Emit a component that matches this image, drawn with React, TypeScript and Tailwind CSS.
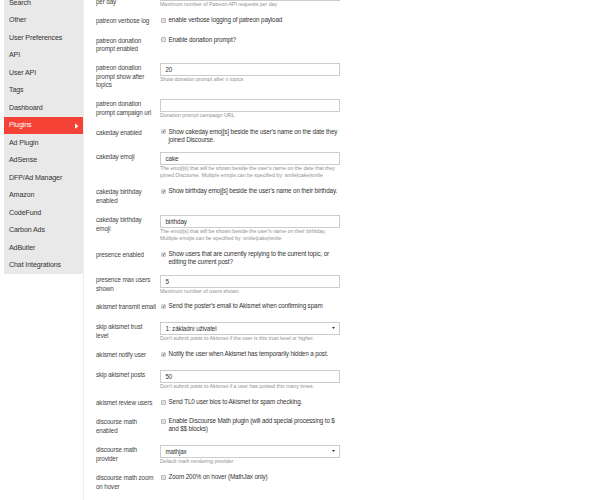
const NAV = [
  'Search', 'Other', 'User Preferences', 'API', 'User API', 'Tags', 'Dashboard', 'Plugins',
  'Ad Plugin', 'AdSense', 'DFP/Ad Manager', 'Amazon', 'CodeFund', 'Carbon Ads', 'AdButler', 'Chat Integrations',
];

type Setting = {
  label: string;
  height: string;
  value?: string;
  select?: boolean;
  check?: boolean;
  text?: string;
  hint?: string;
  labelClass?: string;
};

const SETTINGS: Setting[] = [
  { label: 'per day', height: 'h-[28px]', value: '', hint: 'Maximum number of Patreon API requests per day', labelClass: 'pt-[9.5px]' },
  { label: 'patreon verbose log', height: 'h-[19.5px]', check: false, text: 'enable verbose logging of patreon payload' },
  { label: 'patreon donation\nprompt enabled', height: 'h-[27.5px]', check: false, text: 'Enable donation prompt?' },
  { label: 'patreon donation\nprompt show after\ntopics', height: 'h-[36px]', value: '20', hint: 'Show donation prompt after n topics' },
  { label: 'patreon donation\nprompt campaign url', height: 'h-[28.5px]', value: '', hint: 'Donation prompt campaign URL' },
  { label: 'cakeday enabled', height: 'h-[24.5px]', check: true, text: "Show cakeday emoj[s] beside the user's name on the date they\njoined Discourse." },
  { label: 'cakeday emoji', height: 'h-[35px]', value: 'cake', hint: "The emoji[s] that will be shown beside the user's name on the date that they\njoined Discourse. Multiple emojis can be specified by: smile|cake|smile" },
  { label: 'cakeday birthday\nenabled', height: 'h-[28px]', check: true, text: "Show birthday emoj[s] beside the user's name on their birthday." },
  { label: 'cakeday birthday\nemoji', height: 'h-[35px]', value: 'birthday', hint: "The emoji[s] that will be shown beside the user's name on their birthday.\nMultiple emojis can be specified by: smile|cake|smile" },
  { label: 'presence enabled', height: 'h-[25px]', check: true, text: 'Show users that are currently replying to the current topic, or\nediting the current post?' },
  { label: 'presence max users\nshown', height: 'h-[27px]', value: '5', hint: 'Maximum number of users shown.' },
  { label: 'akismet transmit email', height: 'h-[20px]', check: true, text: "Send the poster's email to Akismet when confirming spam" },
  { label: 'skip akismet trust\nlevel', height: 'h-[28px]', value: '1: základní uživatel', select: true, hint: "Don't submit posts to Akismet if the user is this trust level or higher." },
  { label: 'akismet notify user', height: 'h-[20px]', check: true, text: 'Notify the user when Akismet has temporarily hidden a post.' },
  { label: 'skip akismet posts', height: 'h-[28px]', value: '50', hint: "Don't submit posts to Akismet if a user has posted this many times." },
  { label: 'akismet review users', height: 'h-[19px]', check: false, text: 'Send TL0 user bios to Akismet for spam checking.' },
  { label: 'discourse math\nenabled', height: 'h-[28px]', check: false, text: 'Enable Discourse Math plugin (will add special processing to $\nand $$ blocks)' },
  { label: 'discourse math\nprovider', height: 'h-[28px]', value: 'mathjax', select: true, hint: 'Default math rendering provider' },
  { label: 'discourse math zoom\non hover', height: 'h-[28px]', check: false, text: 'Zoom 200% on hover (MathJax only)' },
];

function Checkbox({ checked }: { checked: boolean }) {
  return (
    <span className={`mt-[1.5px] flex h-[5px] w-[5px] shrink-0 items-center justify-center rounded-[1px] border-[0.5px] ${checked ? 'border-[#cccccc] bg-[#eeeeee]' : 'border-[#bbbbbb] bg-[#e4e4e4]'}`}>
      {checked && (
        <svg viewBox="0 0 10 10" className="h-[5px] w-[5px]">
          <path d="M1.5 5.5 L4 8 L8.5 1.5" fill="none" stroke="#222222" strokeWidth="2.6" />
        </svg>
      )}
    </span>
  );
}

function Row({ item }: { item: Setting }) {
  return (
    <div className={`flex ${item.height}`}>
      <div className={`w-[64px] shrink-0 whitespace-pre pt-[1.25px] text-[6.3px] leading-[8.5px] tracking-[-0.13px] text-[#444444] ${item.labelClass ?? ''}`}>
        {item.label}
      </div>
      <div className="w-[179.5px]">
        {item.check !== undefined ? (
          <div className="flex gap-[3px] pl-[0.5px]">
            <Checkbox checked={item.check} />
            <span className="whitespace-pre text-[6.3px] leading-[8px] tracking-[-0.13px] text-[#333333]">{item.text}</span>
          </div>
        ) : (
          <div className="flex h-[12.5px] items-center justify-between border border-[#cccccc] bg-white pl-[4.5px] pr-[3.5px] text-[6.3px] tracking-[-0.13px] text-[#333333]">
            <span>{item.value}</span>
            {item.select && (
              <svg viewBox="0 0 6 4" className="h-[2px] w-[3px]">
                <path d="M0 0 H6 L3 4 Z" fill="#333333" />
              </svg>
            )}
          </div>
        )}
        {item.hint && (
          <div className="whitespace-pre text-[5.3px] leading-[7.5px] tracking-[-0.04px] text-[#919191]">{item.hint}</div>
        )}
      </div>
    </div>
  );
}

export default function App() {
  return (
    <div className="flex h-[500px] w-[611px] overflow-hidden bg-white pl-[4px] font-['Liberation_Sans',Arial,sans-serif]">
      {/* Sidebar */}
      <div className="h-[500px] w-[80px] shrink-0 border-r border-[#eeeeee]">
        <div className="-mt-[5.75px] bg-[#e9e9e9]">
          {NAV.map((name) => (
            <div
              key={name}
              className={`flex h-[17.5px] items-center justify-between px-[5px] text-[7.1px] tracking-[-0.12px] ${name === 'Plugins' ? 'bg-[#f44336] text-white' : 'text-[#333333]'}`}
            >
              <span>{name}</span>
              {name === 'Plugins' && (
                <svg viewBox="0 0 4 6" className="h-[6px] w-[3.5px]">
                  <path d="M0 0 L4 3 L0 6 Z" fill="#ffffff" />
                </svg>
              )}
            </div>
          ))}
        </div>
      </div>

      {/* Settings */}
      <div className="-mt-[12px] ml-[12px]">
        {SETTINGS.map((item, i) => (
          <Row key={i} item={item} />
        ))}
      </div>
    </div>
  );
}
